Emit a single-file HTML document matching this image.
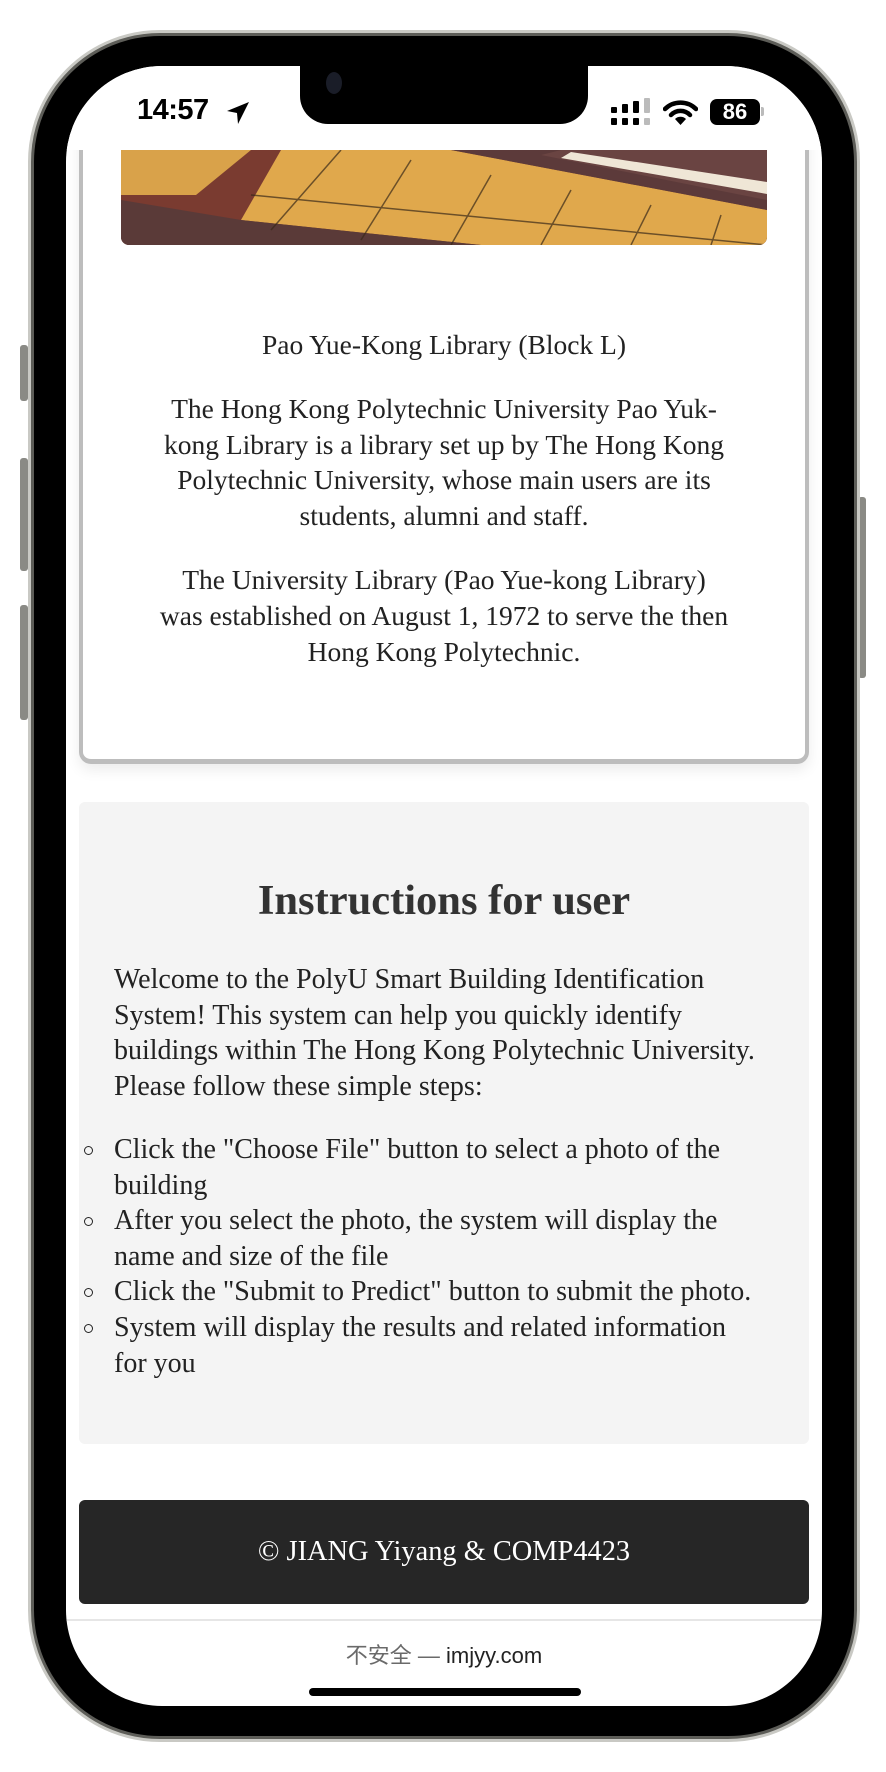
<!DOCTYPE html>
<html><head><meta charset="utf-8"><style>
*{margin:0;padding:0;box-sizing:border-box}
body{width:886px;height:1772px;background:#fff;position:relative;overflow:hidden;font-family:"Liberation Serif",serif}
.abs{position:absolute}
.line{position:absolute;left:0;right:0;text-align:center;white-space:nowrap;height:36px;line-height:36px}
.b{position:absolute;left:5px;width:9px;height:9px;border:1.5px solid #222;border-radius:50%}
</style></head><body>
<div class="abs" style="left:20px;top:345px;width:8px;height:56px;background:#8a8a85;border-radius:3px"></div>
<div class="abs" style="left:20px;top:458px;width:8px;height:113px;background:#8a8a85;border-radius:3px"></div>
<div class="abs" style="left:20px;top:605px;width:8px;height:115px;background:#8a8a85;border-radius:3px"></div>
<div class="abs" style="left:858px;top:497px;width:8px;height:181px;background:#8a8a85;border-radius:3px"></div>
<div class="abs" style="left:28px;top:30px;width:832px;height:1712px;border-radius:132px;background:#5d5d58;border:3px solid #c9c9c4"></div>
<div class="abs" style="left:34px;top:36px;width:820px;height:1700px;border-radius:126px;background:#000"></div>
<div class="abs" style="left:66px;top:66px;width:756px;height:1640px;border-radius:96px;background:#fff;overflow:hidden">
  <!-- card -->
  <div class="abs" style="left:13px;top:40px;width:730px;height:658px;border:4px solid #bdbdbd;border-top:none;border-bottom-width:5px;border-radius:0 0 12px 12px;box-shadow:0 6px 14px rgba(0,0,0,0.08)"></div>
  <div class="abs" style="left:0;top:0;width:756px;height:84px;background:#fff"></div>
  <!-- notch -->
  <div class="abs" style="left:234px;top:-2px;width:288px;height:60px;background:#000;border-radius:0 0 28px 28px"></div>
  <div class="abs" style="left:260px;top:6px;width:16px;height:22px;border-radius:50%;background:#1a1d28"></div>
  <!-- status -->
  <div class="abs" style="left:71px;top:28px;font:600 29px 'Liberation Sans',sans-serif;color:#000;letter-spacing:-0.5px">14:57</div>
  <svg class="abs" style="left:159px;top:34px" width="26" height="26" viewBox="0 0 26 26"><path d="M24 2 L2 11 L12 13 L13 24 Z" fill="#000"/></svg>
  <svg class="abs" style="left:545px;top:32px" width="40" height="28" viewBox="0 0 40 28">
    <rect x="0" y="9" width="6" height="6" rx="1" fill="#000"/><rect x="11" y="6" width="6" height="9" rx="1" fill="#000"/><rect x="22" y="3" width="6" height="12" rx="1" fill="#000"/><rect x="33" y="0" width="6" height="15" rx="1" fill="#bbb"/>
    <rect x="0" y="20" width="6" height="7" rx="1" fill="#000"/><rect x="11" y="20" width="6" height="7" rx="1" fill="#000"/><rect x="22" y="20" width="6" height="7" rx="1" fill="#000"/><rect x="33" y="20" width="6" height="7" rx="1" fill="#bbb"/>
  </svg>
  <svg class="abs" style="left:597px;top:34px" width="35" height="25" viewBox="0 0 35 25">
    <path d="M2 9 A22 22 0 0 1 33 9" stroke="#000" stroke-width="4.5" fill="none" stroke-linecap="round"/>
    <path d="M8 15 A13 13 0 0 1 27 15" stroke="#000" stroke-width="4.5" fill="none" stroke-linecap="round"/>
    <path d="M12 19 L17.5 25 L23 19 A8 8 0 0 0 12 19Z" fill="#000"/>
  </svg>
  <div class="abs" style="left:644px;top:33px;width:50px;height:26px;border-radius:7px;background:#000;color:#fff;font:700 22px 'Liberation Sans',sans-serif;line-height:26px;text-align:center">86</div>
  <div class="abs" style="left:695px;top:41px;width:3px;height:9px;border-radius:0 2px 2px 0;background:#bbb"></div>

  <!-- image -->
  <div class="abs" style="left:55px;top:84px;width:646px;height:95px;border-radius:0 0 8px 8px;overflow:hidden;background:#6b3a30">
    <svg width="646" height="95" viewBox="0 0 646 95">
      <rect width="646" height="95" fill="#7a3b30"/>
      <polygon points="0,0 130,0 75,45 0,45" fill="#d9a24a"/>
      <polygon points="160,0 330,0 646,60 646,95 360,95 120,70" fill="#e0a84c"/>
      <polygon points="330,0 646,0 646,60" fill="#5c3a3a"/>
      <polygon points="440,0 646,0 646,50 420,5" fill="#6a4442"/>
      <polygon points="450,2 646,32 646,44 440,8" fill="#efe6d6"/>
      <polygon points="0,50 120,70 360,95 0,95" fill="#5a3a38"/>
      <g stroke="#3a2a1a" stroke-width="1.5" opacity="0.7">
        <line x1="220" y1="0" x2="150" y2="80"/><line x1="290" y1="10" x2="240" y2="90"/><line x1="370" y1="25" x2="330" y2="95"/><line x1="450" y1="40" x2="420" y2="95"/><line x1="530" y1="55" x2="510" y2="95"/><line x1="600" y1="65" x2="590" y2="95"/>
        <line x1="130" y1="45" x2="646" y2="95"/>
      </g>
    </svg>
  </div>
  <!-- card text -->
  <div style="position:absolute;left:13px;width:730px;top:0;font-size:27.5px;color:#222">
    <div class="line" style="top:261px">Pao Yue-Kong Library (Block L)</div>
    <div class="line" style="top:325px">The Hong Kong Polytechnic University Pao Yuk-</div>
    <div class="line" style="top:361px">kong Library is a library set up by The Hong Kong</div>
    <div class="line" style="top:396px">Polytechnic University, whose main users are its</div>
    <div class="line" style="top:432px">students, alumni and staff.</div>
    <div class="line" style="top:496px">The University Library (Pao Yue-kong Library)</div>
    <div class="line" style="top:532px">was established on August 1, 1972 to serve the then</div>
    <div class="line" style="top:568px">Hong Kong Polytechnic.</div>
  </div>

  <!-- instructions -->
  <div class="abs" style="left:13px;top:736px;width:730px;height:642px;background:#f4f4f4;border-radius:6px;color:#222;font-size:28px">
    <div class="line" style="top:77px;height:44px;line-height:44px;font-weight:700;font-size:42.5px;color:#333">Instructions for user</div>
    <div style="position:absolute;left:35px;top:160px;line-height:35.6px;white-space:nowrap">Welcome to the PolyU Smart Building Identification<br>System! This system can help you quickly identify<br>buildings within The Hong Kong Polytechnic University.<br>Please follow these simple steps:</div>
    <div style="position:absolute;left:35px;top:330px;line-height:35.6px;white-space:nowrap">Click the "Choose File" button to select a photo of the<br>building<br>After you select the photo, the system will display the<br>name and size of the file<br>Click the "Submit to Predict" button to submit the photo.<br>System will display the results and related information<br>for you</div>
    <div class="b" style="top:344px"></div>
    <div class="b" style="top:415px"></div>
    <div class="b" style="top:486px"></div>
    <div class="b" style="top:522px"></div>
  </div>

  <!-- footer -->
  <div class="abs" style="left:13px;top:1434px;width:730px;height:104px;background:#262626;border-radius:6px;color:#fff;font-size:28.4px;text-align:center;line-height:104px">© JIANG Yiyang &amp; COMP4423</div>

  <div class="abs" style="left:0;top:1553px;width:756px;height:2px;background:#e6e6e6"></div>
  <div class="abs" style="left:0;top:1572px;width:756px;text-align:center;font:22px 'Liberation Sans','Noto Sans CJK SC',sans-serif;color:#6a6a6a">不安全 — <span style="color:#222">imjyy.com</span></div>
  <div class="abs" style="left:243px;top:1622px;width:272px;height:8px;border-radius:4px;background:#000"></div>
</div>
</body></html>
